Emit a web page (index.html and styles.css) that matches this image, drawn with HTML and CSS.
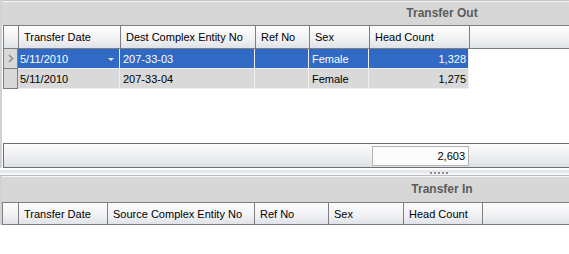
FILE: index.html
```html
<!DOCTYPE html>
<html lang="en">
<head>
    <meta charset="UTF-8">
    <title>Transfers</title>
    <link rel="stylesheet" href="styles.css">
</head>

<body>
    <!-- 上面：转出 -->
    <div class="panel panel-out">
        <div class="title"><span>Transfer Out</span></div>
        <div class="grid">
            <div class="head">
                <div class="ind"></div>
                <div class="c1">Transfer Date</div>
                <div class="c2">Dest Complex Entity No</div>
                <div class="c3">Ref No</div>
                <div class="c4">Sex</div>
                <div class="c5">Head Count</div>
                <div class="fill"></div>
            </div>
            <div class="body">
                <div class="row selected">
                    <div class="ind">
                        <svg width="6" height="9" viewBox="0 0 6 9"><path d="M1 1 L4.5 4.5 L1 8" fill="none" stroke="#8c8c8c" stroke-width="1.6"/></svg>
                    </div>
                    <div class="c1">5/11/2010<i class="drop"></i></div>
                    <div class="c2">207-33-03</div>
                    <div class="c3"></div>
                    <div class="c4">Female</div>
                    <div class="c5 num">1,328</div>
                </div>
                <div class="row">
                    <div class="ind"></div>
                    <div class="c1">5/11/2010</div>
                    <div class="c2">207-33-04</div>
                    <div class="c3"></div>
                    <div class="c4">Female</div>
                    <div class="c5 num">1,275</div>
                </div>
            </div>
            <div class="footer">
                <div class="total">2,603</div>
            </div>
        </div>
    </div>

    <!-- 分隔条 -->
    <div class="splitter"><span></span></div>

    <!-- 下面：转入 -->
    <div class="panel panel-in">
        <div class="title"><span>Transfer In</span></div>
        <div class="grid">
            <div class="head">
                <div class="ind"></div>
                <div class="c1">Transfer Date</div>
                <div class="c2">Source Complex Entity No</div>
                <div class="c3">Ref No</div>
                <div class="c4">Sex</div>
                <div class="c5">Head Count</div>
                <div class="fill"></div>
            </div>
        </div>
    </div>
</body>

</html>
```

FILE: styles.css
```css
* {
    margin: 0;
    padding: 0;
    box-sizing: border-box;
}

body {
    width: 569px;
    height: 254px;
    overflow: hidden;
    background-color: #fff;
    font-family: Tahoma, "Liberation Sans", Arial, sans-serif;
    font-size: 11px;
    color: #000;
}

.panel {
    border-left: 2px solid #d2d2d2;
    background-color: #fff;
}

.title {
    display: flex;
    align-items: center;
    height: 25px;
    border-top: 1px solid #c6c6c6;
    background: linear-gradient(#f4f4f4 0, #f4f4f4 1px, #d8d8d8 1px, #d6d6d6 100%);
}

.title span {
    width: 200px;
    margin-left: auto;
    margin-right: 27px;
    text-align: center;
    font-size: 12px;
    font-weight: bold;
    color: #5c5c5c;
}

.grid {
    margin-left: 1px;
}

.head {
    display: flex;
    height: 24px;
    border-top: 1px solid #7e7e7e;
    border-bottom: 1px solid #7e7e7e;
    border-left: 1px solid #7e7e7e;
    background: linear-gradient(#fdfdfd, #f2f3f5 55%, #dfe2e7);
}

.head div {
    display: flex;
    align-items: center;
    padding-left: 5px;
    border-right: 1px solid #7e7e7e;
}

.head .fill {
    flex: 1;
    border-right: 0;
}

/* 列宽（含右边框） */
.panel-out .ind { width: 15px; }
.panel-out .c1 { width: 102px; }
.panel-out .c2 { width: 135px; }
.panel-out .c3 { width: 54px; }
.panel-out .c4 { width: 60px; }
.panel-out .c5 { width: 100px; }

.panel-in .ind { width: 16px; }
.panel-in .c1 { width: 89px; }
.panel-in .c2 { width: 147px; }
.panel-in .c3 { width: 74px; }
.panel-in .c4 { width: 75px; }
.panel-in .c5 { width: 79px; }

.panel-in .grid {
    margin-left: 0;
}

.panel-in .head {
    height: 23px;
}

.body {
    height: 94px;
}

.row {
    display: flex;
    height: 20px;
}

.row div {
    display: flex;
    align-items: center;
    position: relative;
    padding-left: 2px;
    background-color: #d9d9d9;
    border-right: 1px solid #efefef;
    border-bottom: 1px solid #efefef;
}

.row .c2,
.row .c4 {
    padding-left: 3px;
}

.row .ind {
    justify-content: center;
    padding-left: 0;
    border-left: 1px solid #7e7e7e;
    border-right: 1px solid #7e7e7e;
    border-bottom: 1px solid #7e7e7e;
}

.row .num {
    justify-content: flex-end;
    padding-right: 2px;
}

.row.selected div {
    background-color: #316ac5;
    color: #fff;
}

.row.selected .ind {
    background-color: #d9d9d9;
}

/* 下拉小三角 */
.drop {
    position: absolute;
    right: 5px;
    top: 9px;
    border-left: 3px solid transparent;
    border-right: 3px solid transparent;
    border-top: 3px solid #e8e8e8;
}

.footer {
    display: flex;
    align-items: center;
    height: 25px;
    border: 1px solid #6e6e6e;
    border-right: 0;
    background: linear-gradient(#fdfdfd, #eef0f2 50%, #dde1e6);
}

.total {
    width: 97px;
    height: 20px;
    margin-left: 368px;
    padding-right: 3px;
    line-height: 18px;
    text-align: right;
    border: 1px solid #b4b4b4;
    background-color: #fbfbfb;
}

.splitter {
    position: relative;
    height: 8px;
    background: linear-gradient(#ffffff 0, #ffffff 2px, #e4e7ec 2px, #e4e7ec 5px, #f6f7f9 5px, #f6f7f9 7px, #bdbdbd 7px);
}

.splitter span {
    position: absolute;
    left: 430px;
    top: 4px;
    width: 18px;
    height: 2px;
    background: repeating-linear-gradient(90deg, #8c8c8c 0, #8c8c8c 2px, transparent 2px, transparent 4px);
}

.panel-in .title {
    height: 26px;
    border-top: 0;
}
```
